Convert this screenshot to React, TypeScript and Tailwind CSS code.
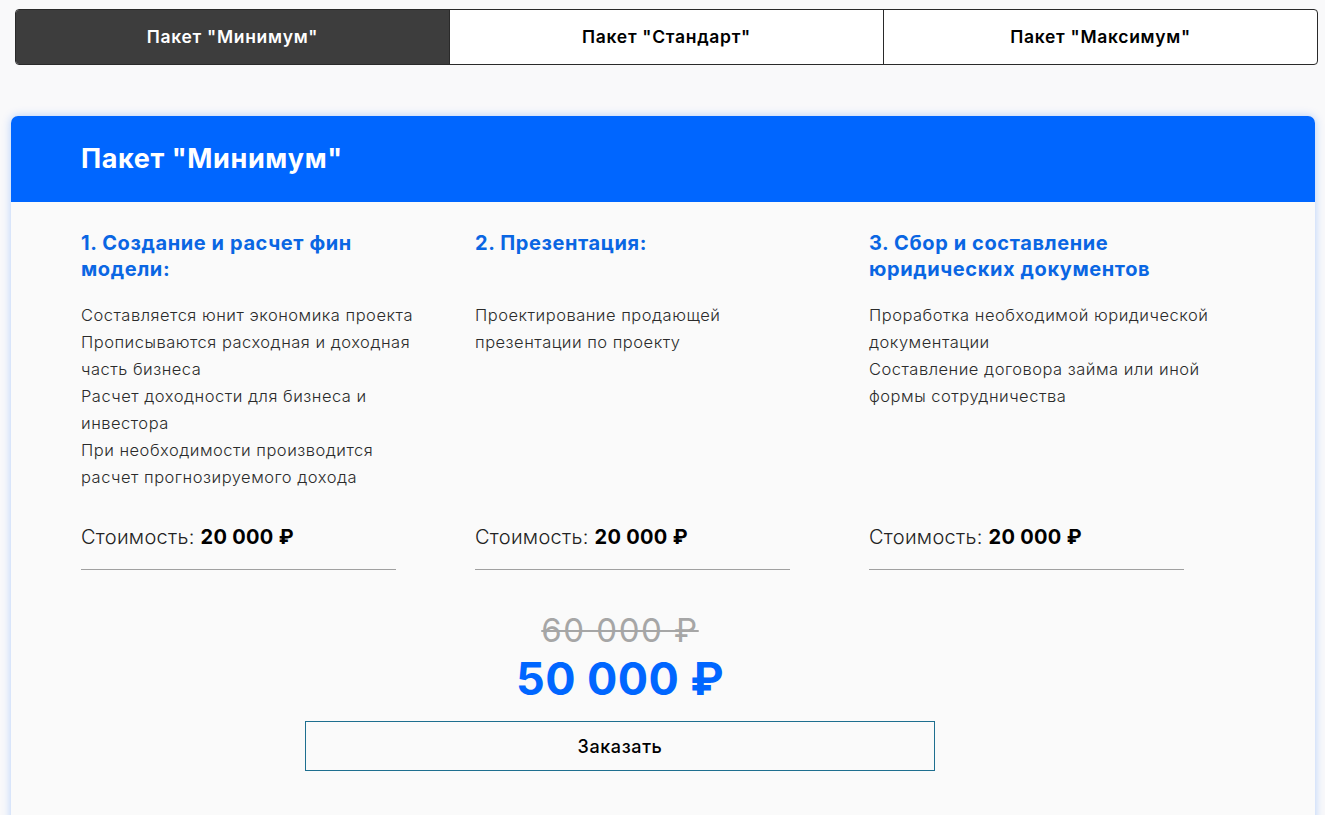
import React from "react";

const tabs = ['Пакет "Минимум"', 'Пакет "Стандарт"', 'Пакет "Максимум"'];

const services = [
  {
    title: "1. Создание и расчет фин модели:",
    lines: [
      "Составляется юнит экономика проекта",
      "Прописываются расходная и доходная часть бизнеса",
      "Расчет доходности для бизнеса и инвестора",
      "При необходимости производится расчет прогнозируемого дохода",
    ],
  },
  {
    title: "2. Презентация:",
    lines: ["Проектирование продающей презентации по проекту"],
  },
  {
    title: "3. Сбор и составление юридических документов",
    lines: [
      "Проработка необходимой юридической документации",
      "Составление договора займа или иной формы сотрудничества",
    ],
  },
];

const font = { fontFamily: "Inter, 'Noto Sans', sans-serif" };

export default function App() {
  return (
    <div className="min-h-[815px] bg-[#f9f9fa] pt-[9px]" style={font}>
      {/* Tabs */}
      <div className="ml-[15px] flex h-[56px] w-[1303px] overflow-hidden rounded-[4px] border border-[#2a2a2a] bg-white">
        {tabs.map((t, i) => (
          <div
            key={t}
            className={
              i === 0
                ? "flex flex-1 items-center justify-center bg-[#3d3d3d] text-[17.5px] font-semibold tracking-[0.7px] text-white"
                : "flex flex-1 items-center justify-center border-l border-[#2a2a2a] text-[17.5px] font-semibold tracking-[0.7px] text-black"
            }
          >
            {t}
          </div>
        ))}
      </div>

      {/* Card */}
      <div className="ml-[11px] mt-[51px] w-[1304px] rounded-t-[7px] bg-[#fafafa] pb-[60px] shadow-[0_0_10px_rgba(0,102,255,0.28)]">
        <div className="flex h-[86px] items-center rounded-t-[7px] bg-[#0066ff] pl-[70px]">
          <h2 className="text-[27px] font-bold tracking-[0.6px] text-white">Пакет "Минимум"</h2>
        </div>

        <div className="px-[70px] pt-[28px]">
          <div className="grid grid-cols-[345px_345px_345px] gap-x-[49px]">
            {services.map((s) => (
              <div key={s.title} className="flex flex-col">
                <h3 className="mb-[20px] min-h-[52px] text-[20px] font-bold leading-[26px] tracking-[0.6px] text-[#0a66e3]">
                  {s.title}
                </h3>
                <div className="text-[16.5px] font-light leading-[27px] tracking-[0.5px] text-[#2b2b2b]">
                  {s.lines.map((l) => (
                    <p key={l}>{l}</p>
                  ))}
                </div>
                <div className="mt-auto pt-[32px]">
                  <div className="w-[315px] border-b border-[#a0a0a0] pb-[18px] text-[20px] font-light leading-[28px] tracking-[0.3px] text-[#222]">
                    Стоимость: <span className="font-bold text-black">20 000 ₽</span>
                  </div>
                </div>
              </div>
            ))}
          </div>

          <div className="flex w-[1078px] flex-col items-center pt-[42px]">
            <div className="text-[33px] leading-[36px] tracking-[1.5px] text-[#a6a6a6] line-through decoration-[2px]">
              60 000 ₽
            </div>
            <div className="mt-[5px] text-[45px] font-bold leading-[52px] tracking-[0.4px] text-[#0066ff]">50 000 ₽</div>
            <button className="mt-[16px] flex h-[50px] w-[630px] items-center justify-center border border-[#1e6f8f] text-[18px] font-medium tracking-[0.6px] text-black">
              Заказать
            </button>
          </div>
        </div>
      </div>
    </div>
  );
}
